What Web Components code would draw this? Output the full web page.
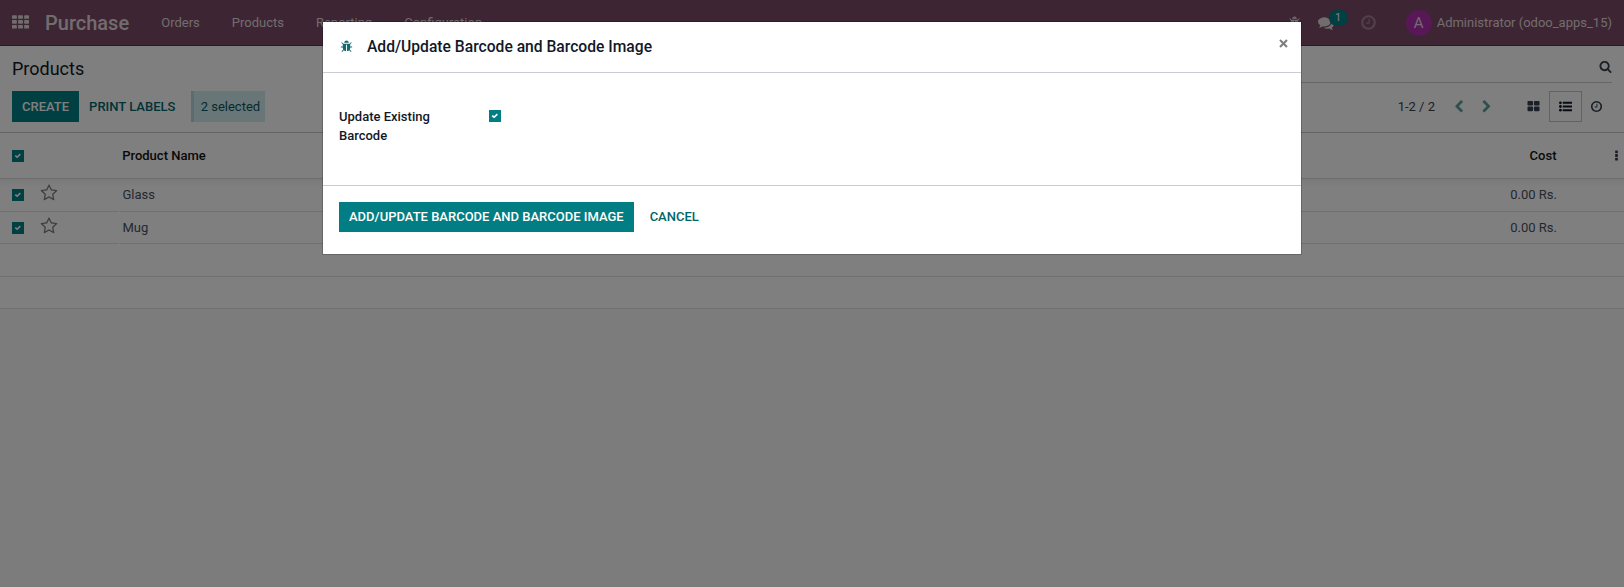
<!DOCTYPE html>
<html lang="en">
<head>
<meta charset="utf-8">
<title>Purchase - Products</title>
<style>
html,body{margin:0;height:100%;overflow:hidden}
body{font:400 13px/19.5px Roboto,"Liberation Sans",sans-serif;color:#4c4c5c;background:#f8f9fa}
</style>
</head>
<body>
<purchase-app></purchase-app>
<script>
const ICONS = {
  search:'<path d="M1216 832q0-185-131.5-316.5t-316.5-131.5-316.5 131.5-131.5 316.5 131.5 316.5 316.5 131.5 316.5-131.5 131.5-316.5zm512 832q0 52-38 90t-90 38q-54 0-90-38l-343-342q-179 124-399 124-143 0-273.5-55.5t-225-150-150-225-55.5-273.5 55.5-273.5 150-225 225-150 273.5-55.5 273.5 55.5 225 150 150 225 55.5 273.5q0 220-124 399l343 343q37 37 37 90z"/>',
  clock:'<path d="M1024 544v448q0 14-9 23t-23 9h-320q-14 0-23-9t-9-23v-64q0-14 9-23t23-9h224v-352q0-14 9-23t23-9h64q14 0 23 9t9 23zm416 352q0-148-73-273t-198-198-273-73-273 73-198 198-73 273 73 273 198 198 273 73 273-73 198-198 73-273zm224 0q0 209-103 385.5t-279.5 279.5-385.5 103-385.5-103-279.5-279.5-103-385.5 103-385.5 279.5-279.5 385.5-103 385.5 103 279.5 279.5 103 385.5z"/>',
  kanban:'<path d="M832 1024v384q0 52-38 90t-90 38h-512q-52 0-90-38t-38-90v-384q0-52 38-90t90-38h512q52 0 90 38t38 90zm0-768v384q0 52-38 90t-90 38h-512q-52 0-90-38t-38-90v-384q0-52 38-90t90-38h512q52 0 90 38t38 90zm896 768v384q0 52-38 90t-90 38h-512q-52 0-90-38t-38-90v-384q0-52 38-90t90-38h512q52 0 90 38t38 90zm0-768v384q0 52-38 90t-90 38h-512q-52 0-90-38t-38-90v-384q0-52 38-90t90-38h512q52 0 90 38t38 90z"/>',
  list:'<circle cx="192" cy="384" r="192"/><circle cx="192" cy="896" r="192"/><circle cx="192" cy="1408" r="192"/><rect x="512" y="256" width="1280" height="256" rx="32"/><rect x="512" y="768" width="1280" height="256" rx="32"/><rect x="512" y="1280" width="1280" height="256" rx="32"/>',
  left:'<path d="M1427 301l-531 531 531 531q19 19 19 45t-19 45l-166 166q-19 19-45 19t-45-19l-742-742q-19-19-19-45t19-45l742-742q19-19 45-19t45 19l166 166q19 19 19 45t-19 45z"/>',
  right:'<path transform="matrix(-1 0 0 1 1792 0)" d="M1427 301l-531 531 531 531q19 19 19 45t-19 45l-166 166q-19 19-45 19t-45-19l-742-742q-19-19-19-45t19-45l742-742q19-19 45-19t45 19l166 166q19 19 19 45t-19 45z"/>',
  star:'<path d="M1201 1004l306-297-422-62-189-382-189 382-422 62 306 297-73 421 378-199 377 199zm527-357q0 22-26 48l-363 354 86 500q1 7 1 20 0 50-41 50-19 0-40-12l-449-236-449 236q-22 12-40 12-21 0-31.5-14.5t-10.5-35.5q0-6 2-20l86-500-364-354q-25-27-25-48 0-37 56-46l502-73 225-455q19-41 49-41t49 41l225 455 502 73q56 9 56 46z"/>',
  comments:'<path d="M1408 768q0 139-94 257t-256.5 186.5-353.5 68.5q-86 0-176-16-124 88-278 128-36 9-86 16h-3q-11 0-20.5-8t-11.5-21q-1-3-1-6.5t.5-6.5 2-6l2.5-5 3.5-5.5 4-5 4.5-5 4-4.5q5-6 23-25t26-29.5 22.5-29 25-38.5 20.5-44q-124-72-195-177t-71-224q0-139 94-257t256.5-186.5 353.5-68.5 353.5 68.5 256.5 186.5 94 257zm384 256q0 120-71 224.5t-195 176.5q10 24 20.5 44t25 38.5 22.5 29 26 29.5 23 25q1 1 4 4.5t4.5 5 4 5 3.5 5.5l2.5 5 2 6 .5 6.5-1 6.5q-3 14-13 22t-22 7q-50-7-86-16-154-40-278-128-90 16-176 16-271 0-472-132 58 4 88 4 161 0 309-45t264-129q125-92 192-212t67-254q0-77-23-152 129 71 204 178t75 230z"/>',
  bug:'<path d="M1696 960q0 26-19 45t-45 19h-224q0 171-67 290l208 209q19 19 19 45t-19 45q-18 19-45 19t-45-19l-198-197q-5 5-15 13t-42 28.5-65 36.5-82 29-97 13v-896h-128v896q-51 0-101.5-13.5t-87-33-66-39-43.5-32.5l-15-14-183 207q-20 21-48 21-24 0-43-16-19-18-20.5-44.5t15.5-46.5l202-227q-58-114-58-274h-224q-26 0-45-19t-19-45 19-45 45-19h224v-294l-173-173q-19-19-19-45t19-45 45-19 45 19l173 173h844l173-173q19-19 45-19t45 19 19 45-19 45l-173 173v294h224q26 0 45 19t19 45zm-480-576h-640q0-133 93.5-226.5t226.5-93.5 226.5 93.5 93.5 226.5z"/>',
  apps:[0,1,2].map(r=>[0,1,2].map(c=>`<rect x="${c*640}" y="${128+r*512}" width="512" height="384" rx="90"/>`).join('')).join(''),
  dots:[256,768,1280].map(y=>`<rect x="704" y="${y-64}" width="384" height="384" rx="90"/>`).join(''),
  check:'<path d="M300 860L740 1250L1520 500" fill="none" stroke="currentColor" stroke-width="400"/>',
  close:'<path d="M200 200L1592 1592M1592 200L200 1592" fill="none" stroke="currentColor" stroke-width="420"/>'
};
function element(name, html, setup){
  customElements.define(name, class extends HTMLElement{
    constructor(){
      super();
      const t=document.createElement('template');
      t.innerHTML=html;
      this.attachShadow({mode:'open'}).append(t.content.cloneNode(true));
    }
    connectedCallback(){ if(setup) setup(this,this.shadowRoot); }
  });
}

element('ui-icon',`<style>:host{display:block;flex:none;width:var(--size,13px);height:var(--size,13px)}svg{display:block;width:100%;height:100%;fill:currentColor;overflow:visible}</style><svg viewBox="0 0 1792 1792"></svg>`,
  (host,root)=>{ root.querySelector('svg').innerHTML=ICONS[host.getAttribute('name')]; });

element('ui-check',`<style>:host{display:grid;place-items:center;flex:none;width:12px;height:12px;background:#017e84;color:#fff}ui-icon{--size:7.5px}</style><ui-icon name="check"></ui-icon>`);

element('ui-button',`<style>
:host{display:block;flex:none;box-sizing:border-box;height:31px;padding:0 10px;line-height:31px;font-weight:500;text-transform:uppercase;white-space:nowrap;color:#01666b}
:host([primary]){background:#017e84;color:#fff}
</style><slot></slot>`);

element('nav-bar',`<style>
:host{display:flex;align-items:center;box-sizing:border-box;height:46px;padding:0 12px;background:#7c4a66;border-bottom:1px solid #56304a;color:#e2dade;line-height:46px;white-space:nowrap}
.apps{--size:17px;margin-right:16px}
.brand{font-size:20px;font-weight:500;width:116.2px}
nav{display:flex;gap:32px}
.tray{margin-left:auto;display:flex;align-items:center}
.talk{position:relative;--size:16px;margin:0 26px 0 17px}
.badge{position:absolute;left:11px;top:-5px;width:19px;height:16px;border-radius:8px;background:#017e84;color:#fff;font-size:11px;line-height:16px;text-align:center}
.clock{--size:17px;color:#a28093;margin-right:29px}
.avatar{width:26px;height:26px;border-radius:50%;background:#b030ae;display:grid;place-items:center;font-size:15px;line-height:26px;margin-right:5px}
</style>
<ui-icon class="apps" name="apps"></ui-icon><span class="brand">Purchase</span>
<nav><span>Orders</span><span>Products</span><span>Reporting</span><span>Configuration</span></nav>
<div class="tray"><ui-icon name="bug"></ui-icon><div class="talk"><ui-icon name="comments"></ui-icon><span class="badge">1</span></div><ui-icon class="clock" name="clock"></ui-icon><span class="avatar">A</span><span>Administrator (odoo_apps_15)</span></div>`);

element('control-panel',`<style>
:host{display:block;box-sizing:border-box;height:87px;padding:0 12px;background:#fff;border-bottom:1px solid #c8c8cc}
.top{display:flex;height:45px}
.title{flex:1;font-size:18px;line-height:46px;color:#111827}
.search{width:800px;height:37px;box-sizing:border-box;border-bottom:1px solid #c9ccd2;display:flex;justify-content:flex-end;padding-top:14px;color:#374151}
.bottom{display:flex;align-items:center;height:31px}
.sel{box-sizing:border-box;width:74px;height:31px;border-left:3px solid #b4d9dc;background:#d1ecf1;color:#0c5460;padding-left:7px;line-height:31px;margin-left:5.3px;white-space:nowrap}
.right{margin-left:auto;display:flex;align-items:center;color:#374151}
.chev{--size:13.5px;color:#5aa09f}
.active{box-sizing:border-box;width:33px;height:31px;border:1px solid #c3c5ca;display:grid;place-items:center;color:#111827}
</style>
<div class="top"><div class="title">Products</div><div class="search"><ui-icon name="search"></ui-icon></div></div>
<div class="bottom"><ui-button primary>Create</ui-button><ui-button>Print Labels</ui-button><span class="sel">2 selected</span>
<div class="right"><span>1-2 / 2</span><ui-icon class="chev" name="left" style="margin:0 14.5px 0 17px"></ui-icon><ui-icon class="chev" name="right" style="margin-right:33.5px"></ui-icon><ui-icon name="kanban" style="margin-right:9px"></ui-icon><span class="active"><ui-icon name="list"></ui-icon></span><ui-icon name="clock" style="margin:0 9px 0 8px"></ui-icon></div></div>`);

element('product-row',`<style>
:host{display:grid;grid-template-columns:27.5px 79px 16px 1fr auto;align-items:center;box-sizing:border-box;height:var(--h,33px);padding:0 67px 0 12px;border-bottom:1px solid #e0e0e3;background:#fff;color:#4b5160}
:host(:first-of-type){background:linear-gradient(#f3f3f3,#fff 8px)}
ui-icon{--size:18px;color:#7b7f8a;margin-top:var(--star,-5px)}
.gap{width:1px;height:1px;align-self:end;margin-bottom:-1px;background:#fff}
slot:not([name]){display:block;margin-left:-12px}
</style><ui-check></ui-check><ui-icon name="star"></ui-icon><i class="gap"></i><span><slot></slot></span><slot name="cost"></slot>`);

element('product-list',`<style>
:host{display:block}
.head{box-sizing:border-box;display:flex;align-items:center;height:46px;padding:0 1.5px 0 12px;background:#fff;border-bottom:1px solid #d8d8da;font-weight:500;color:#111}
.name{flex:1;margin-left:98.2px}
.head ui-icon{margin-left:53px;--size:13px;color:#374151}
.blank{box-sizing:border-box;height:33px;background:#fff;border-bottom:1px solid #e0e0e3}
.blank:last-child{height:32px}
</style>
<div class="head"><ui-check></ui-check><span class="name">Product Name</span><span>Cost</span><ui-icon name="dots"></ui-icon></div>
<product-row>Glass<span slot="cost">0.00 Rs.</span></product-row>
<product-row style="--h:32px;--star:-3px">Mug<span slot="cost">0.00 Rs.</span></product-row>
<div class="blank"></div><div class="blank"></div>`);

element('modal-dialog',`<style>
:host{display:block;position:absolute;inset:0;background:rgba(0,0,0,.5);z-index:5}
.box{box-sizing:border-box;width:980px;height:234px;margin:21px auto 0;border:1px solid rgba(0,0,0,.2);background:#fff;background-clip:padding-box;display:flex;flex-direction:column}
header{box-sizing:border-box;height:51px;border-bottom:1px solid #c9ccd2;display:flex;align-items:center;padding:0 11px 3px 16.5px;color:#111827}
header .bug{color:#17686f;margin:1px 14.5px 0 0}
h4{flex:1;margin:2px 0 0;font-size:15.65px;font-weight:500}
.x{--size:9px;color:#7f7f7f;margin:-4px 2.5px 0 0}
main{height:113px;box-sizing:border-box;border-bottom:1px solid #c9ccd2;padding:34px 16px 0;display:grid;grid-template-columns:150px 1fr;align-items:start;color:#111827}
.label{width:130px;font-weight:500;line-height:19px}
main ui-check{margin-top:3px}
footer{display:flex;gap:6px;padding:16px}
footer ui-button{height:30px;line-height:30px}
</style>
<div class="box"><header><ui-icon class="bug" name="bug"></ui-icon><h4><slot name="title"></slot></h4><ui-icon class="x" name="close"></ui-icon></header>
<main><span class="label">Update Existing Barcode</span><ui-check></ui-check></main>
<footer><ui-button primary>Add/Update Barcode and Barcode Image</ui-button><ui-button>Cancel</ui-button></footer></div>`);

element('purchase-app',`<style>:host{display:block;position:relative;height:100%;overflow:hidden}</style>
<nav-bar></nav-bar><control-panel></control-panel><product-list></product-list>
<modal-dialog><span slot="title">Add/Update Barcode and Barcode Image</span></modal-dialog>`);
</script>
</body>
</html>
